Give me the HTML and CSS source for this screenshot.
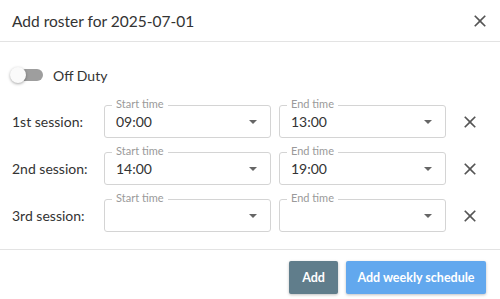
FILE: index.html
```html
<!DOCTYPE html>
<html lang="en">
<head>
<meta charset="UTF-8">
<meta name="viewport" content="width=device-width, initial-scale=1.0">
<title>Add roster</title>
<link rel="stylesheet" href="styles.css">
</head>
<body>
    <div class="dialog">
        <div class="dialog-head">
            <h1>Add roster for 2025-07-01</h1>
            <button class="icon-btn" aria-label="Close">
                <svg viewBox="0 0 24 24"><path d="M19 6.41 17.59 5 12 10.59 6.41 5 5 6.41 10.59 12 5 17.59 6.41 19 12 13.41 17.59 19 19 17.59 13.41 12z"/></svg>
            </button>
        </div>

        <div class="dialog-body">
            <label class="toggle-row">
                <span class="switch"><span class="track"></span><span class="knob"></span></span>
                <span>Off Duty</span>
            </label>

            <div class="session">
                <span class="session-label">1st session:</span>
                <div class="field">
                    <span class="field-label">Start time</span>
                    <span class="field-value">09:00</span>
                    <span class="arrow"></span>
                </div>
                <div class="field">
                    <span class="field-label">End time</span>
                    <span class="field-value">13:00</span>
                    <span class="arrow"></span>
                </div>
                <button class="icon-btn" aria-label="Remove">
                    <svg viewBox="0 0 24 24"><path d="M19 6.41 17.59 5 12 10.59 6.41 5 5 6.41 10.59 12 5 17.59 6.41 19 12 13.41 17.59 19 19 17.59 13.41 12z"/></svg>
                </button>
            </div>

            <div class="session">
                <span class="session-label">2nd session:</span>
                <div class="field">
                    <span class="field-label">Start time</span>
                    <span class="field-value">14:00</span>
                    <span class="arrow"></span>
                </div>
                <div class="field">
                    <span class="field-label">End time</span>
                    <span class="field-value">19:00</span>
                    <span class="arrow"></span>
                </div>
                <button class="icon-btn" aria-label="Remove">
                    <svg viewBox="0 0 24 24"><path d="M19 6.41 17.59 5 12 10.59 6.41 5 5 6.41 10.59 12 5 17.59 6.41 19 12 13.41 17.59 19 19 17.59 13.41 12z"/></svg>
                </button>
            </div>

            <div class="session">
                <span class="session-label">3rd session:</span>
                <div class="field">
                    <span class="field-label">Start time</span>
                    <span class="field-value"></span>
                    <span class="arrow"></span>
                </div>
                <div class="field">
                    <span class="field-label">End time</span>
                    <span class="field-value"></span>
                    <span class="arrow"></span>
                </div>
                <button class="icon-btn" aria-label="Remove">
                    <svg viewBox="0 0 24 24"><path d="M19 6.41 17.59 5 12 10.59 6.41 5 5 6.41 10.59 12 5 17.59 6.41 19 12 13.41 17.59 19 19 17.59 13.41 12z"/></svg>
                </button>
            </div>
        </div>

        <div class="dialog-foot">
            <button class="btn btn-grey">Add</button>
            <button class="btn btn-blue">Add weekly schedule</button>
        </div>
    </div>
</body>
</html>
```

FILE: styles.css
```css
* {
    margin: 0;
    padding: 0;
    box-sizing: border-box;
}
body {
    font-family: 'Lato', sans-serif;
    background-color: #fff;
    color: #333;
}
.dialog {
    width: 500px;
}
.dialog-head {
    height: 42px;
    display: flex;
    align-items: center;
    justify-content: space-between;
    padding: 0 10px 0 12px;
    border-bottom: 1px solid #e3e3e3;
}
h1 {
    font-size: 15.5px;
    font-weight: 400;
    color: #333;
}
.icon-btn {
    width: 20px;
    height: 20px;
    border: none;
    background: none;
    cursor: pointer;
}
.icon-btn svg {
    width: 20px;
    height: 20px;
    display: block;
    fill: #555;
}
.dialog-body {
    padding: 25px 0 17px 12px;
}
.toggle-row {
    display: flex;
    align-items: center;
    gap: 9px;
    font-size: 14px;
    height: 16px;
    margin-bottom: 22px;
}
.switch {
    position: relative;
    width: 32px;
    height: 16px;
}
.track {
    position: absolute;
    left: 3px;
    top: 2px;
    width: 28px;
    height: 12px;
    border-radius: 6px;
    background-color: #9e9e9e;
}
.knob {
    position: absolute;
    left: -2px;
    top: 0;
    width: 16px;
    height: 16px;
    border-radius: 50%;
    background-color: #fafafa;
    box-shadow: 0 1px 3px rgba(0, 0, 0, 0.35);
}
.session {
    display: flex;
    align-items: center;
    height: 33px;
    margin-bottom: 14px;
}
.session:last-child {
    margin-bottom: 0;
}
.session-label {
    width: 92px;
    font-size: 14px;
}
.field {
    position: relative;
    width: 167px;
    height: 33px;
    margin-right: 8px;
    display: flex;
    align-items: center;
    padding-left: 11px;
    border: 1px solid #d4d4d4;
    border-radius: 3px;
}
.field + .field {
    margin-right: 14px;
}
.field-label {
    position: absolute;
    left: 7px;
    top: -8px;
    padding: 0 4px;
    background-color: #fff;
    font-size: 11px;
    line-height: 12px;
    color: #9a9a9a;
}
.field-value {
    flex: 1;
    font-size: 14px;
}
.arrow {
    width: 0;
    height: 0;
    margin-right: 13px;
    border-left: 4px solid transparent;
    border-right: 4px solid transparent;
    border-top: 4px solid #666;
}
.dialog-foot {
    display: flex;
    justify-content: flex-end;
    gap: 8px;
    padding: 11px 14px;
    border-top: 1px solid #e3e3e3;
}
.btn {
    height: 33px;
    padding: 0 13px;
    border: none;
    border-radius: 2px;
    font-family: 'Lato', sans-serif;
    font-size: 12.5px;
    font-weight: 700;
    color: #fff;
    cursor: pointer;
    box-shadow: 0 1px 3px rgba(0, 0, 0, 0.25);
}
.btn-grey {
    background-color: #607d8b;
}
.btn-blue {
    padding: 0 11.5px;
    background-color: #62a8ee;
}
```
